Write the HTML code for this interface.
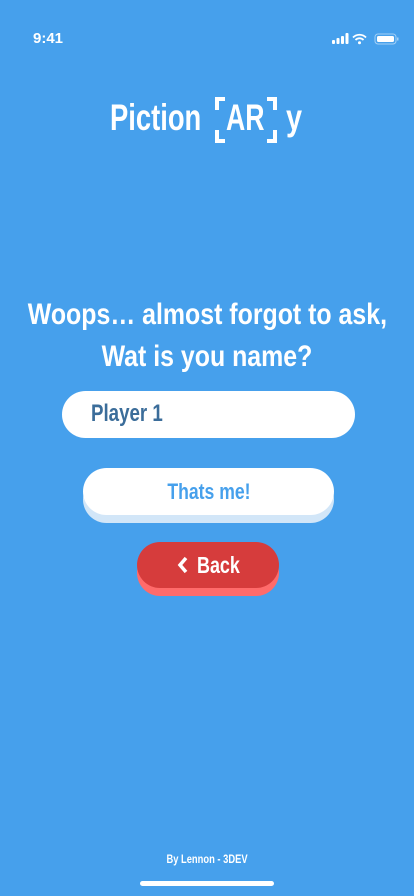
<!DOCTYPE html>
<html><head><meta charset="utf-8"><style>
body{margin:0;width:414px;height:896px;background:#46a0ec;position:relative;overflow:hidden;font-family:"Liberation Sans",sans-serif;color:#fff}
.a{position:absolute}
.n{display:inline-block;transform:scaleX(.78);white-space:nowrap;font-weight:bold}
.ctr{text-align:center}
.ctr .n{transform-origin:center}
.l .n{transform-origin:left}
</style></head><body>
<div class="a" style="left:33px;top:30px;font-size:15px;font-weight:bold">9:41</div>
<svg class="a" style="left:332px;top:33px" width="68" height="12">
<rect x="0" y="7" width="3" height="4" rx="1" fill="#fff"/><rect x="4.5" y="5" width="3" height="6" rx="1" fill="#fff"/><rect x="9" y="3" width="3" height="8" rx="1" fill="#fff"/><rect x="13.5" y="0" width="3" height="11" rx="1" fill="#fff"/>
<path d="M21 4.5a9 9 0 0 1 13 0M23.5 7a5.5 5.5 0 0 1 8 0" stroke="#fff" stroke-width="1.8" fill="none"/><circle cx="27.5" cy="9.8" r="1.5" fill="#fff"/>
<rect x="43" y="1" width="21" height="10" rx="3" stroke="#fff" stroke-opacity=".5" fill="none"/><rect x="45" y="3" width="17" height="6" rx="1.5" fill="#fff"/><rect x="65" y="4.5" width="1.5" height="3" fill="#fff" opacity=".5"/>
</svg>
<div class="a l" style="left:110px;top:97px;font-size:37px;line-height:42px"><span class="n" style="transform:scaleX(.74)">Piction</span></div>
<svg class="a" style="left:213px;top:96px" width="66" height="48" fill="none" stroke="#fff" stroke-width="4">
<path d="M12 3H4V14M4 34V45H12M54 3H62V14M62 34V45H54"/></svg>
<div class="a l" style="left:226px;top:97px;font-size:37px;line-height:42px"><span class="n" style="transform:scaleX(.72)">AR</span></div>
<div class="a l" style="left:286px;top:97px;font-size:37px;line-height:42px"><span class="n" style="transform:scaleX(.78)">y</span></div>
<div class="a ctr" style="left:-100px;width:614px;top:294px;font-size:30px;line-height:42px"><span class="n" style="transform:scaleX(.83)">Woops… almost forgot to ask,</span><br><span class="n" style="transform:scaleX(.83)">Wat is you name?</span></div>
<div class="a" style="left:62px;top:391px;width:293px;height:47px;border-radius:24px;background:#fff"></div>
<div class="a l" style="left:91px;top:398px;font-size:24px;color:#3b6d9a;line-height:32px"><span class="n">Player 1</span></div>
<div class="a" style="left:83px;top:476px;width:251px;height:47px;border-radius:24px;background:#d2e6f8"></div>
<div class="a ctr" style="left:83px;top:468px;width:251px;height:47px;border-radius:24px;background:#fff;color:#46a0ec;font-size:22px;line-height:47px"><span class="n" style="transform:scaleX(.8)">Thats me!</span></div>
<div class="a" style="left:137px;top:550px;width:142px;height:46px;border-radius:23px;background:#ff6b6b"></div>
<div class="a" style="left:137px;top:542px;width:142px;height:46px;border-radius:23px;background:#d63c3c"></div>
<svg class="a" style="left:177px;top:556px" width="12" height="18"><path d="M9 2L3 9L9 16" stroke="#fff" stroke-width="3.5" fill="none"/></svg>
<div class="a l" style="left:197px;top:542px;font-size:23px;line-height:46px"><span class="n">Back</span></div>
<div class="a ctr" style="left:0;width:414px;top:852px;font-size:12px"><span class="n">By Lennon - 3DEV</span></div>
<div class="a" style="left:140px;top:881px;width:134px;height:5px;border-radius:3px;background:#fff"></div>
</body></html>
